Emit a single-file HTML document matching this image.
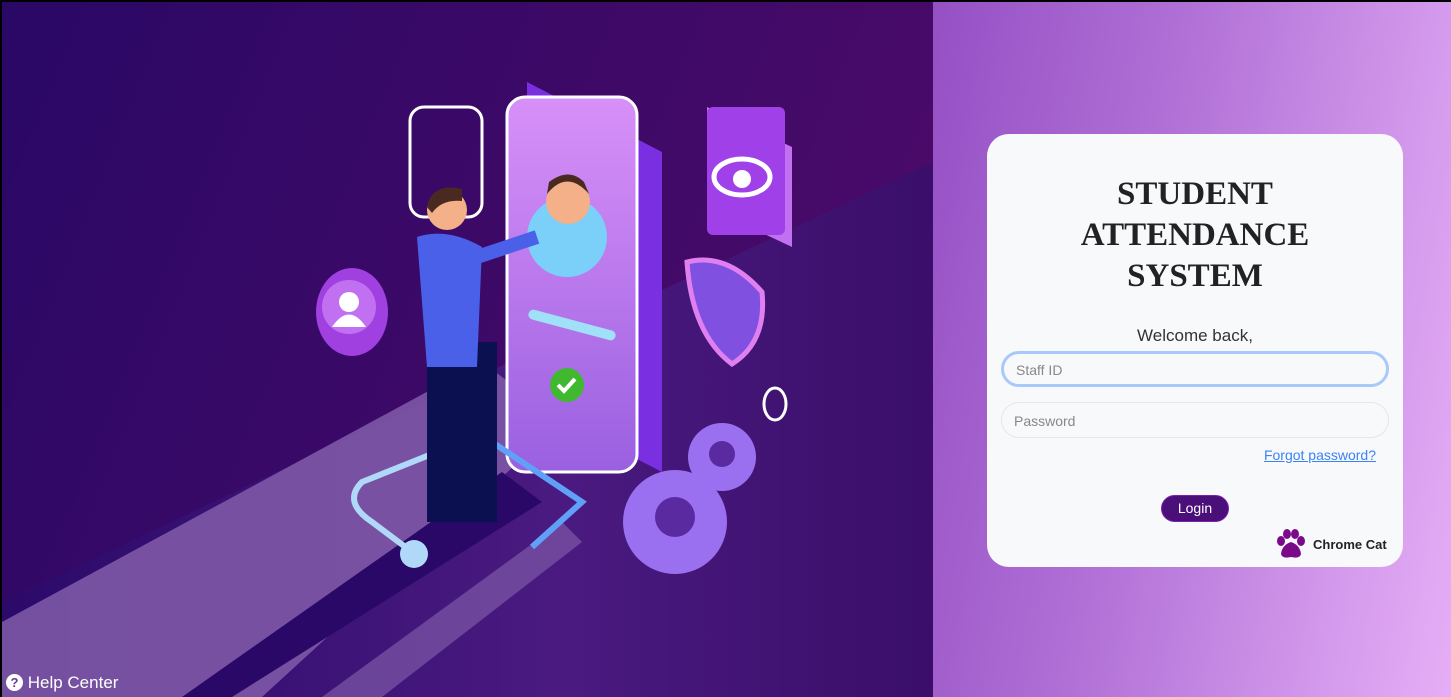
<!DOCTYPE html>
<html><head><style>
body{margin:0;width:1451px;height:697px;overflow:hidden;background:#000;font-family:"Liberation Sans",sans-serif}
.wrap{position:absolute;left:2px;top:2px;width:1449px;height:695px;overflow:hidden}
.left{position:absolute;left:0;top:0;width:931px;height:695px}
.right{position:absolute;left:931px;top:0;width:518px;height:695px;background:linear-gradient(100deg,#9550c4 0%,#b070d6 40%,#d49aec 80%,#e6aef6 100%)}
.card{position:absolute;left:987px;top:134px;width:416px;height:433px;background:#f8f9fb;border-radius:22px}
h1{position:absolute;left:0;width:416px;top:40px;margin:0;text-align:center;font-family:"Liberation Serif",serif;font-weight:bold;font-size:33px;line-height:41px;color:#222;letter-spacing:0}
.wel{position:absolute;top:192px;width:416px;text-align:center;font-size:17px;color:#333}
.in{position:absolute;left:14px;width:388px;height:36px;border-radius:18px;box-sizing:border-box;font-size:14px;color:#888;padding:9px 0 0 12px}
.in1{top:217px;border:3px solid #a9c8fb;padding-top:8px}
.in2{top:268px;border:1px solid #e6e6e6;padding-top:10px}
.fp{position:absolute;right:27px;top:313px;font-size:14px;color:#3b82f6;text-decoration:underline}
.btn{position:absolute;left:174px;top:361px;width:68px;height:27px;border-radius:14px;background:#4b0f7a;border:1px solid #7a20b0;box-sizing:border-box;color:#fff;font-size:14px;text-align:center;line-height:25px}
.cc{position:absolute;left:326px;top:403px;font-size:13px;font-weight:bold;color:#222}
.help{position:absolute;left:6px;top:673px;color:#fff;font-size:17px}
</style></head><body><div class="wrap">
<svg class="left" viewBox="0 0 931 695" width="931" height="695">
<defs>
<linearGradient id="bg" x1="0" y1="0" x2="1" y2="0.3"><stop offset="0" stop-color="#2a0866"/><stop offset="1" stop-color="#4a0a68"/></linearGradient>
<linearGradient id="fl" x1="0" y1="0" x2="1" y2="0"><stop offset="0" stop-color="#2b0a6a"/><stop offset="0.6" stop-color="#4a1a80"/><stop offset="1" stop-color="#3a0e6a"/></linearGradient>
<linearGradient id="ph" x1="0" y1="0" x2="0" y2="1"><stop offset="0" stop-color="#d890f8"/><stop offset="1" stop-color="#9a60e0"/></linearGradient>
</defs>
<rect width="931" height="695" fill="url(#bg)"/>
<polygon points="0,695 0,600 931,160 931,695" fill="url(#fl)"/>
<polygon points="0,620 480,360 560,420 260,695 0,695" fill="#7e58a6" opacity=".9"/>
<polygon points="180,695 500,470 540,500 230,695" fill="#2a0868"/>
<polygon points="320,695 560,520 580,540 380,695" fill="#7e58a6" opacity=".7"/>
<rect x="408" y="105" width="72" height="110" rx="14" fill="none" stroke="#fff" stroke-width="3"/>
<polygon points="525,80 660,150 660,470 525,400" fill="#7a30e0"/>
<rect x="505" y="95" width="130" height="375" rx="18" fill="url(#ph)" stroke="#fff" stroke-width="3"/>
<circle cx="565" cy="235" r="40" fill="#7ad0f8"/>
<circle cx="566" cy="200" r="22" fill="#f4b088"/>
<path d="M545 192 q20 -25 42 0 l-5 -12 q-15 -15 -35 0z" fill="#4a2a20"/>
<rect x="525" y="318" width="90" height="10" rx="5" fill="#a0e0f8" transform="rotate(15 570 323)"/>
<circle cx="565" cy="383" r="17" fill="#40b830"/>
<path d="M556 383 l6 6 l11 -12" stroke="#fff" stroke-width="4" fill="none"/>
<polygon points="705,105 790,145 790,245 705,205" fill="#c070f0"/>
<rect x="705" y="105" width="78" height="128" rx="6" fill="#a040e8"/>
<ellipse cx="740" cy="175" rx="28" ry="18" fill="none" stroke="#fff" stroke-width="5"/>
<circle cx="740" cy="177" r="9" fill="#fff"/>
<path d="M685 260 q40 -10 75 30 q5 50 -30 72 q-40 -30 -45 -102z" fill="#8050e0" stroke="#e080f0" stroke-width="5"/>
<ellipse cx="350" cy="310" rx="36" ry="44" fill="#a040e0"/>
<circle cx="347" cy="305" r="27" fill="#c070f0"/>
<circle cx="347" cy="300" r="10" fill="#fff"/><path d="M330 325 q17 -25 34 0z" fill="#fff"/>
<ellipse cx="773" cy="402" rx="11" ry="16" fill="none" stroke="#fff" stroke-width="3"/>
<circle cx="720" cy="455" r="34" fill="#9a70f0"/><circle cx="720" cy="452" r="13" fill="#5a2aa0"/>
<circle cx="673" cy="520" r="52" fill="#9a70f0"/><circle cx="673" cy="515" r="20" fill="#5a2aa0"/>
<path d="M460 440 l-100 40 q-20 20 10 40 l40 30" stroke="#b0d8f8" stroke-width="6" fill="none"/>
<circle cx="412" cy="552" r="14" fill="#b0d8f8"/>
<path d="M490 440 l90 60 l-50 45" stroke="#60a0f8" stroke-width="6" fill="none"/>
<rect x="425" y="340" width="70" height="180" fill="#0a1050"/>
<path d="M415 235 q30 -10 65 10 l-5 120 l-50 0z" fill="#4a60e8"/>
<path d="M475 255 l60 -20" stroke="#4a60e8" stroke-width="14"/>
<circle cx="445" cy="208" r="20" fill="#f4b088"/>
<path d="M425 205 q5 -25 35 -18 l0 12 q-20 -2 -30 12z" fill="#4a2a20"/>
</svg>
<div class="right"></div>
</div>
<div class="card">
<h1>STUDENT<br>ATTENDANCE<br>SYSTEM</h1>
<div class="wel">Welcome back,</div>
<div class="in in1">Staff ID</div>
<div class="in in2">Password</div>
<div class="fp">Forgot password?</div>
<div class="btn">Login</div>
<svg style="position:absolute;left:288px;top:395px" width="32" height="30" viewBox="0 0 30 30"><g fill="#7a0a8a"><ellipse cx="5" cy="12" rx="4" ry="5"/><ellipse cx="11" cy="5" rx="4" ry="5"/><ellipse cx="19" cy="5" rx="4" ry="5"/><ellipse cx="25" cy="12" rx="4" ry="5"/><path d="M15 13 q9 3 10 12 q-1 5 -10 3 q-9 2 -10 -3 q1 -9 10 -12z"/></g></svg>
<div class="cc">Chrome Cat</div>
</div>
<div class="help"><span style="display:inline-block;width:17px;height:17px;border-radius:50%;background:#fff;color:#6a3a9a;font-size:13px;font-weight:bold;text-align:center;line-height:17px;vertical-align:1px">?</span> Help Center</div>
</body></html>
